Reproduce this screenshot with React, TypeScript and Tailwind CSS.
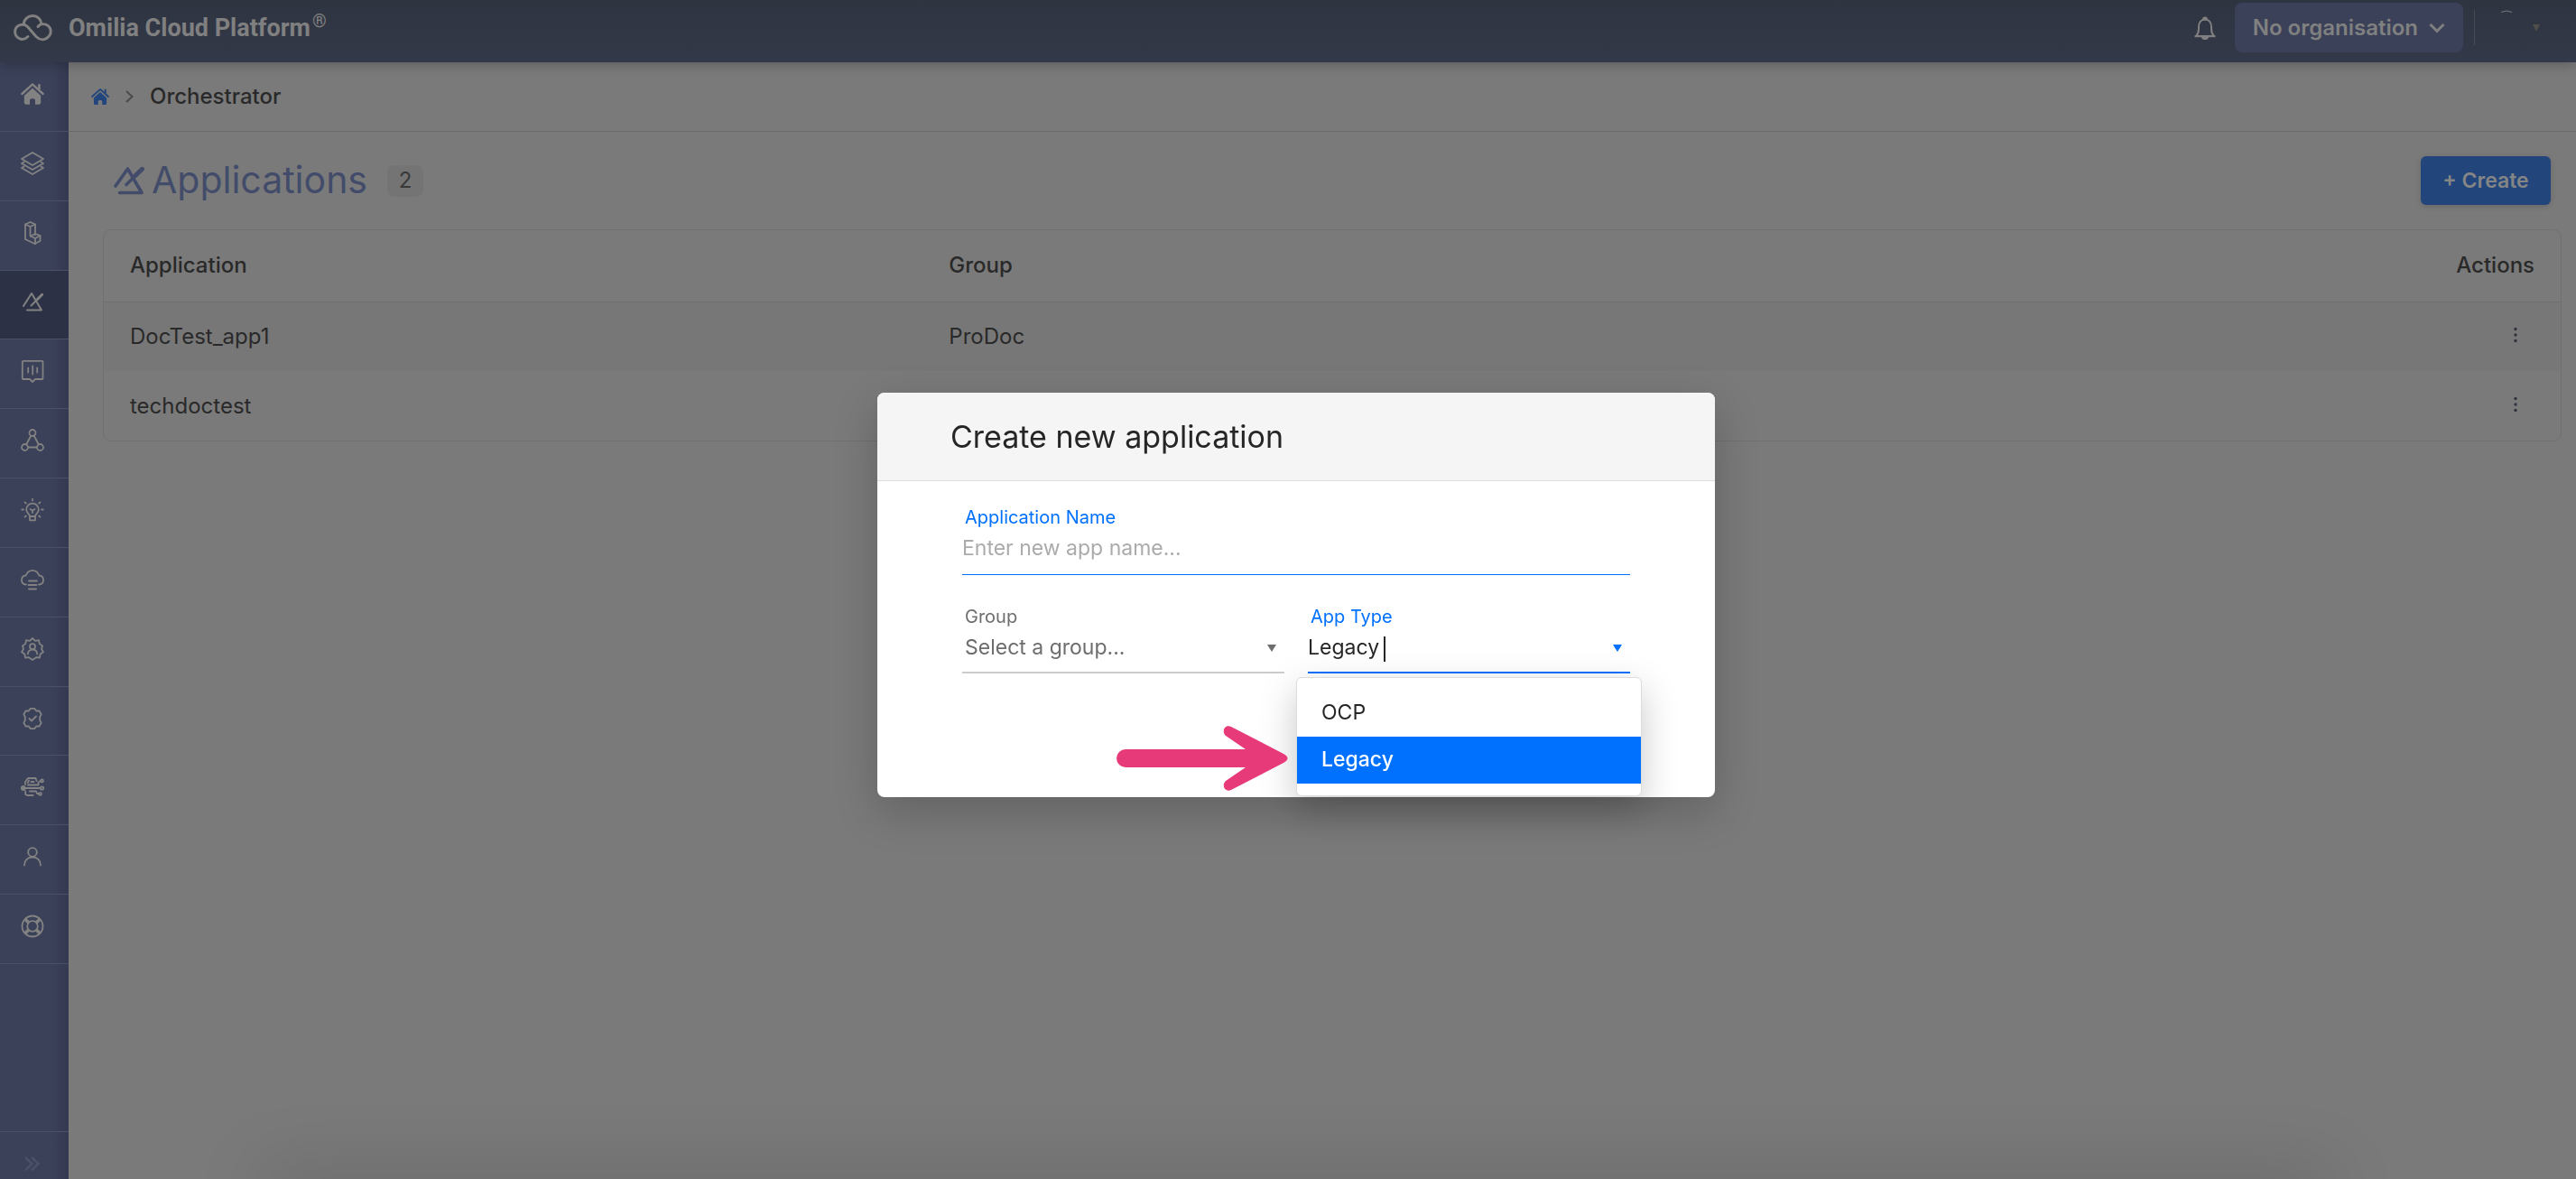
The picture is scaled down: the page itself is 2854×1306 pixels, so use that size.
import React, { useState } from "react";

type IconProps = { className?: string };

type Application = {
  id: number;
  name: string;
  group: string;
};

const applications: Application[] = [
  { id: 1, name: "DocTest_app1", group: "ProDoc" },
  { id: 2, name: "techdoctest", group: "ProDoc" },
];

const appTypes = ["OCP", "Legacy"];

const Icon = ({ className = "size-[26px]", children }: IconProps & { children: React.ReactNode }) => (
  <svg
    className={className}
    viewBox="0 0 26 26"
    fill="none"
    stroke="currentColor"
    strokeWidth={1.8}
    strokeLinecap="round"
    strokeLinejoin="round"
    aria-hidden="true"
  >
    {children}
  </svg>
);

const HomeIcon = ({ className }: IconProps) => (
  <Icon className={className}>
    <path d="M1.4 13 13 2.4 24.6 13" strokeWidth={2.4} />
    <path d="M20.4 2.2v6" strokeWidth={2.6} strokeLinecap="butt" />
    <path
      d="M13 6.6 3.8 15v7.4a2.4 2.4 0 0 0 2.4 2.4H10v-4.6a2 2 0 0 1 2-2h2a2 2 0 0 1 2 2v4.6h3.8a2.4 2.4 0 0 0 2.4-2.4V15Z"
      fill="currentColor"
      stroke="none"
    />
  </Icon>
);

const LayersIcon = () => (
  <Icon>
    <path d="M13 1 25 8 13 15 1 8Z" />
    <path d="M3.6 11.4 1 13l12 7 12-7-2.6-1.6" />
    <path d="M3.6 16.4 1 18l12 7 12-7-2.6-1.6" />
  </Icon>
);

const BlocksIcon = () => (
  <Icon>
    <path d="M10.5 1 16 3.5V15M10.5 1 5 3.5V20l10.500 5 6-3v-6L16 14l-5 2.500" />
    <path d="M5 3.5 10.500 6 16 3.500M10.500 6v10.500M11 16.500l5 2.500 5.500-3M16 19v6" />
  </Icon>
);

const MetronomeIcon = () => (
  <Icon>
    <path d="M3 18 12 4l11 18.500H7" strokeWidth={2} />
    <path d="M11.500 17.500 23.800 5.200" strokeWidth={2} />
    <path d="m18.500 10.500 5.200-5.200" strokeWidth={2.800} />
  </Icon>
);

const VoiceIcon = () => (
  <Icon>
    <path d="M3 1.800h20.500a1 1 0 0 1 1 1V21a1 1 0 0 1-1 1H16l-3 3-3-3H2.800a1 1 0 0 1-1-1V3a1.200 1.200 0 0 1 1.200-1.200Z" />
    <path d="M8.200 9.500v5M13.200 7.500v9M18.200 9.500v5" />
  </Icon>
);

const NetworkIcon = () => (
  <Icon>
    <circle cx="13" cy="4.500" r="3.500" />
    <circle cx="4.500" cy="20.500" r="3.500" />
    <circle cx="21.500" cy="20.500" r="3.500" />
    <path d="M11.300 7.800 6.200 17.300M14.700 7.800l5.100 9.500M8.200 20.500h9.600" />
  </Icon>
);

const BulbIcon = () => (
  <Icon>
    <path d="M10 20c0-2.400-3.800-3.600-3.800-7.500a6.800 6.800 0 0 1 13.600 0c0 3.900-3.800 5.100-3.800 7.500Z" />
    <path d="M10 20v4.300h6V20M10.500 12l2.500 1.500 2.500-1.500M13 13.500V16" />
    <path d="M13 .8v1.600M4.600 4.400l1.200 1.100M21.400 4.400l-1.200 1.100M1.200 12.500h1.700M23.100 12.500h1.700M4.600 20.600l1.200-1.100M21.400 20.600l-1.200-1.100" />
  </Icon>
);

const CloudIcon = () => (
  <Icon>
    <path d="M6 18.500C3 18.200 1 16 1 13.400c0-2.800 1.900-4.800 4.700-5.100C7 5 9.500 2.800 13 2.800s6 2.200 7.300 5.500c2.800.3 4.700 2.300 4.700 5.100 0 2.600-2 4.800-5 5.100" />
    <path d="M9 14.500h9M8.500 19h9M9 23.500h8" />
  </Icon>
);

const BadgeUserIcon = () => (
  <Icon>
    <path d="m13 1 3 2.800 4-.6.800 3.900L24 9.500 23 13l2 3.200-3.300 2.300-.7 4-4-.3-4 2.800-4-2.800-4 .3-.700-4L1 16.200 3 13 2 9.500l3.200-2.400.8-3.900 4 .6Z" />
    <circle cx="13" cy="10.200" r="3" />
    <path d="M7.800 18.500c0-3 2.200-4.800 5.200-4.800s5.200 1.800 5.200 4.800" />
  </Icon>
);

const BadgeCheckIcon = () => (
  <Icon>
    <path d="M10.800 1.800h4.400l2 2.700 3.300-.1 2.200 3.800-1.500 3v3.600l1.500 3-2.200 3.800-3.300-.1-2 2.700h-4.400l-2-2.700-3.300.1-2.200-3.800 1.500-3v-3.600l-1.500-3 2.200-3.800 3.300.1Z" />
    <path d="m9.500 13 2.500 2.500 5-5" />
  </Icon>
);

const MindIcon = () => (
  <Icon>
    <circle cx="2.800" cy="14" r="2" fill="currentColor" />
    <circle cx="23.500" cy="14" r="1.700" />
    <circle cx="23.500" cy="6" r="1.500" />
    <circle cx="21.500" cy="20.500" r="1.400" />
    <path d="M5 14h16.500M5 10V7l3-4h8.500l1 3M9 5.500 7.800 8M11.500 7h3M8 10.500h11.500V7.500L22 6M5.200 17.500V21l2 1h6.500M10 17.500h7l1 2.500h2" />
  </Icon>
);

const UserIcon = () => (
  <Icon>
    <circle cx="13" cy="8" r="4.800" />
    <path d="M4 22.500c0-5.500 3.800-9 9-9s9 3.500 9 9" />
  </Icon>
);

const LifebuoyIcon = () => (
  <Icon>
    <circle cx="13" cy="13" r="11.500" />
    <circle cx="13" cy="13" r="5.800" />
    <path d="M5.500 4.500 9.300 8.300M4.500 6l3.600 3.500M20.500 4.500l-3.800 3.800M21.500 6l-3.600 3.500M5.500 21.500l3.800-3.800M4.500 20l3.600-3.500M20.500 21.500l-3.800-3.800M21.500 20l-3.600-3.500" />
  </Icon>
);

const navItems = [
  { label: "Home", icon: <HomeIcon /> },
  { label: "Layers", icon: <LayersIcon /> },
  { label: "Blocks", icon: <BlocksIcon /> },
  { label: "Orchestrator", icon: <MetronomeIcon />, active: true },
  { label: "Voice", icon: <VoiceIcon /> },
  { label: "Network", icon: <NetworkIcon /> },
  { label: "Insights", icon: <BulbIcon /> },
  { label: "Cloud", icon: <CloudIcon /> },
  { label: "Identity", icon: <BadgeUserIcon /> },
  { label: "Quality", icon: <BadgeCheckIcon /> },
  { label: "Learning", icon: <MindIcon /> },
  { label: "Account", icon: <UserIcon /> },
  { label: "Support", icon: <LifebuoyIcon /> },
];

const Header = () => (
  <header className="relative z-10 flex h-[69px] shrink-0 items-center bg-linear-to-b from-[#2f3441] to-[#343949] pl-[14px] pr-10 pb-2 text-[#808080] shadow-[0_2px_14px_rgba(0,0,0,0.25)]">
    <svg className="h-[32px] w-[46px]" viewBox="0 0 46 32" fill="none" stroke="currentColor" strokeWidth="3" strokeLinecap="round" aria-hidden="true">
      <path d="M17 25.500C14.500 28 11.500 29 9 28.200c-4.500-1-7-5-6.300-9.400C3.500 14 8 11.500 12.500 12.300c3 .5 4.800 3 7 5.700l6.500 7.500c3.500 3.500 8.500 4.200 12.200 1.500 5.500-4 5.300-11-.2-14.200-3.500-2-7.500-1.300-10 1.700" />
      <path d="M12.300 12C12.500 6.500 17 2.500 22.300 2.500c5.200 0 9.300 4 9.500 9" />
    </svg>
    <div className="ml-4 flex items-start font-[Roboto,sans-serif]">
      <span className="text-[27px] leading-8 font-bold">Omilia Cloud Platform</span>
      <span className="ml-[2px] text-[20px] leading-4">®</span>
    </div>
    <div className="ml-auto flex items-center">
      <button type="button" aria-label="Notifications" className="mr-5">
        <svg className="h-[28px] w-[26px]" viewBox="0 0 26 28" fill="none" stroke="currentColor" strokeWidth="2" strokeLinejoin="round" aria-hidden="true">
          <path d="M3 23c1.500-1.500 3-4 3-8v-2c0-5 2.600-8.500 7-8.500s7 3.500 7 8.500v2c0 4 1.500 6.500 3 8Z" />
          <path d="M1.500 23.200h23" />
          <path d="M11 4.500a2 2 0 0 1 4 0ZM10 24h6c-.3 1.500-1.500 2-3 2s-2.700-.5-3-2Z" fill="currentColor" />
        </svg>
      </button>
      <button type="button" className="flex h-[55px] items-center gap-3 rounded-lg bg-[#3b4159] px-5 text-[24px] font-semibold">
        No organisation
        <svg className="h-[12px] w-[18px]" viewBox="0 0 18 12" fill="none" stroke="currentColor" strokeWidth="3" aria-hidden="true">
          <path d="m1.500 2 7.500 7.500L16.500 2" />
        </svg>
      </button>
      <div className="ml-3 h-[39px] border-l border-[#484b54]" />
      <button type="button" aria-label="Profile" className="ml-6 flex h-[39px] w-[48px] items-start justify-between pl-1">
        <svg className="h-[3px] w-[14px]" viewBox="0 0 14 3" fill="none" stroke="#777a80" aria-hidden="true">
          <path d="M1 2.500Q7-.5 13 2.500" />
        </svg>
        <svg className="mt-4 h-[8px] w-[8px]" viewBox="0 0 8 8" fill="#504e4a" aria-hidden="true">
          <path d="M0 0h8L4 8Z" />
        </svg>
      </button>
    </div>
  </header>
);

const Sidebar = () => (
  <nav className="flex w-[76px] shrink-0 flex-col justify-between bg-linear-to-r from-[#3b4159] from-75% to-[#343950] text-[#828282]">
    <ul className="flex h-[999px] flex-col">
      {navItems.map((item) => (
        <li key={item.label} className="flex-1 border-b border-[#4a5067]">
          <a
            href="#"
            aria-label={item.label}
            className={
              item.active
                ? "flex h-full items-center justify-center bg-[#2c3145] pr-1 pb-1.5"
                : "flex h-full items-center justify-center pr-1 pb-1.5"
            }
          >
            {item.icon}
          </a>
        </li>
      ))}
    </ul>
    <button type="button" aria-label="Expand menu" className="flex h-[53px] items-end justify-center border-t border-[#4a5067] pr-1 pb-2 text-[#4a5067]">
      <svg className="h-[18px] w-[18px]" viewBox="0 0 18 18" fill="none" stroke="currentColor" strokeWidth="2.600" strokeLinecap="round" aria-hidden="true">
        <path d="m2 3 6.500 6L2 15.500M9 3l6.500 6L9 15.500" />
      </svg>
    </button>
  </nav>
);

const ApplicationsTable = () => (
  <div className="mr-4 ml-[38px] overflow-hidden rounded-[9px] border border-[#707070]">
    <table className="w-full table-fixed text-left text-[24px] text-[#292929]">
      <thead>
        <tr className="h-[79px] border-b border-[#707070]">
          <th className="w-1/3 pl-[29px] font-medium">Application</th>
          <th className="pl-[29px] font-medium">Group</th>
          <th className="w-[200px] pr-[29px] text-right font-medium">Actions</th>
        </tr>
      </thead>
      <tbody>
        {applications.map((app) => (
          <tr key={app.id} className="h-[77px] odd:bg-[#777777]">
            <td className="pl-[29px]">{app.name}</td>
            <td className="pl-[29px]">{app.group}</td>
            <td className="pr-[46px]">
              <button type="button" aria-label={`Actions for ${app.name}`} className="ml-auto block pb-1">
                <svg className="h-[18px] w-[8px]" viewBox="0 0 8 18" fill="#30343f" aria-hidden="true">
                  <circle cx="4" cy="2.500" r="1.700" />
                  <circle cx="4" cy="9" r="1.700" />
                  <circle cx="4" cy="15.500" r="1.700" />
                </svg>
              </button>
            </td>
          </tr>
        ))}
      </tbody>
    </table>
  </div>
);

const Triangle = ({ className }: IconProps) => (
  <svg className={className} viewBox="0 0 10 8" fill="currentColor" aria-hidden="true">
    <path d="M0 0h10L5 8Z" />
  </svg>
);

const CreateDialog = () => {
  const [name, setName] = useState("");
  const [appType, setAppType] = useState("Legacy");

  return (
    <div role="dialog" aria-labelledby="dialog-title" className="relative w-[928px] rounded-lg bg-white text-[#262626] shadow-[0_16px_50px_rgba(0,0,0,0.2)]">
      <div className="flex h-[98px] items-center rounded-t-lg border-b border-[#dedede] bg-[#f5f5f5] pl-[81px]">
        <h2 id="dialog-title" className="text-[34px]">Create new application</h2>
      </div>

      <form className="px-[94px] pt-7 pb-[137px]">
        <label htmlFor="app-name" className="block pl-[3px] text-[20px] leading-6 text-[#0070ff]">
          Application Name
        </label>
        <input
          id="app-name"
          value={name}
          onChange={(e) => setName(e.target.value)}
          placeholder="Enter new app name..."
          className="block h-[52px] w-full border-b border-[#0070ff] pb-[7px] text-[23px] outline-none placeholder:text-[#ababab]"
        />

        <div className="mt-[34px] grid grid-cols-2 gap-[26px]">
          <div className="relative">
            <label htmlFor="group" className="block pl-[3px] text-[20px] leading-6 text-[#6e6e6e]">
              Group
            </label>
            <select
              id="group"
              className="block h-[51px] w-full appearance-none border-b-2 border-[#cccccc] pb-1 pl-[3px] text-[23px] text-[#6e6e6e] outline-none"
            >
              <option>Select a group...</option>
            </select>
            <Triangle className="absolute right-[9px] bottom-6 h-[8px] w-[10px] text-[#6e6e6e]" />
          </div>

          <div className="relative">
            <label htmlFor="app-type" className="block pl-[3px] text-[20px] leading-6 text-[#0070ff]">
              App Type
            </label>
            <input
              id="app-type"
              value={appType}
              onChange={(e) => setAppType(e.target.value)}
              className="block h-[51px] w-full border-b-2 border-[#0070ff] pb-1 text-[23px] outline-none"
            />
            <span className="absolute bottom-[13px] left-[84px] h-[28px] w-[2px] bg-[#262626]" />
            <Triangle className="absolute right-[9px] bottom-6 h-[8px] w-[10px] text-[#0070ff]" />

            <ul className="absolute top-full -right-[13px] -left-[13px] mt-1 rounded-md border border-[#dcdcdc] bg-white py-[13px] text-[23px] shadow-[0_14px_40px_rgba(0,0,0,0.22)]">
              {appTypes.map((type) => (
                <li key={type}>
                  <button
                    type="button"
                    onClick={() => setAppType(type)}
                    className={
                      type === appType
                        ? "block h-[52px] w-full bg-[#0070ff] pl-[27px] text-left font-medium text-white"
                        : "block h-[52px] w-full pl-[27px] text-left"
                    }
                  >
                    {type}
                  </button>
                </li>
              ))}
            </ul>

            {/* Pointer to the selected option */}
            <svg className="absolute top-full right-full mt-[58px] mr-[21px] h-[72px] w-[191px]" viewBox="0 0 191 72" fill="#e63a79" aria-hidden="true">
              <path d="M10 26H143L121 11C116 6 120 -2 127 1L185 31Q194 36 185 41L127 71C120 74 116 66 121 61L143 46H10A10 10 0 0 1 10 26Z" />
            </svg>
          </div>
        </div>
      </form>
    </div>
  );
};

const App = () => {
  return (
    <div className="flex min-h-screen flex-col bg-[#7a7a7a] font-[Inter,sans-serif]">
      <Header />
      <div className="flex flex-1">
        <Sidebar />
        <main className="min-w-0 flex-1">
          {/* Breadcrumb */}
          <div className="flex h-[77px] items-center border-b border-[#6a6a6a] pl-[25px] text-[#292929]">
            <a href="#" aria-label="Home" className="text-[#22457c]">
              <HomeIcon className="size-[20px]" />
            </a>
            <svg className="ml-[18px] h-[14px] w-[9px] text-[#4c4c4c]" viewBox="0 0 9 14" fill="none" stroke="currentColor" strokeWidth="2.200" aria-hidden="true">
              <path d="m1 1 6.500 6L1 13" />
            </svg>
            <span className="ml-[18px] text-[24px] font-medium">Orchestrator</span>
          </div>

          {/* Title row */}
          <div className="flex h-[108px] items-center pr-7 pl-[50px]">
            <svg className="h-[32px] w-[35px] text-[#424c6a]" viewBox="0 0 35 32" fill="none" stroke="currentColor" strokeWidth="3.600" strokeLinecap="round" strokeLinejoin="round" aria-hidden="true">
              <path d="M2 22 15.500 3 31 29.500H6.500" />
              <path d="m14 20.500 17-17" />
              <path d="m24 10.500 7.500-7.200" strokeWidth="5" />
            </svg>
            <h1 className="ml-[7px] text-[41px] text-[#424c6a]">Applications</h1>
            <span className="ml-[22px] flex h-[35px] w-[40px] items-center justify-center rounded-lg bg-[#747474] text-[24px] text-[#383838]">
              {applications.length}
            </span>
            <button type="button" className="ml-auto h-[54px] w-[144px] rounded-md bg-[#22457c] text-[23px] font-semibold text-[#858585] shadow-[0_2px_6px_rgba(0,0,0,0.15)]">
              + Create
            </button>
          </div>

          <ApplicationsTable />
        </main>
      </div>

      <div className="fixed inset-0 z-20 flex items-center justify-center overflow-hidden pt-[11px] pl-[18px]">
        <div className="pointer-events-none absolute right-[280px] -bottom-5 left-[300px] h-4 shadow-[0_0_80px_10px_rgba(0,0,0,0.18)]" />
        <CreateDialog />
      </div>
    </div>
  );
};

export default App;
